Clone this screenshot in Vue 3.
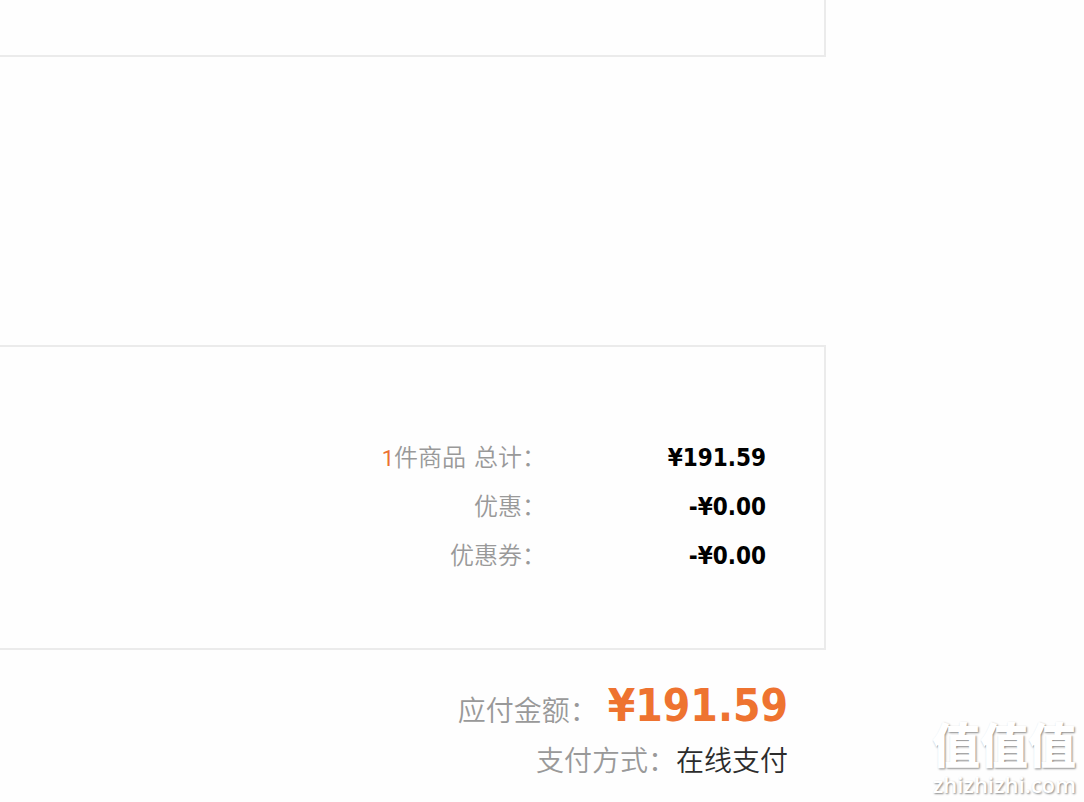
<script setup>
const rows = [
  { count: '1', label: '件商品', extra: '总计：', value: '¥191.59' },
  { label: '优惠：', value: '-¥0.00' },
  { label: '优惠券：', value: '-¥0.00' },
]
</script>

<template>
  <main class="page">
    <section class="panel previous"></section>
    <section class="panel totals">
      <dl>
        <div v-for="row in rows" :key="row.label" class="row">
          <dt>
            <span v-if="row.count" class="count">{{ row.count }}</span>{{ row.label }}<span v-if="row.extra" class="extra">{{ row.extra }}</span>
          </dt>
          <dd>{{ row.value }}</dd>
        </div>
      </dl>
    </section>
    <dl class="payment">
      <div class="due">
        <dt>应付金额：</dt>
        <dd class="amount">¥191.59</dd>
      </div>
      <div class="method">
        <dt>支付方式：</dt>
        <dd>在线支付</dd>
      </div>
    </dl>
    <div class="watermark">
      <span class="brand">值值值</span>
      <span class="domain">zhizhizhi.com</span>
    </div>
  </main>
</template>

<style>
body {
  margin: 0;
  background: #fefefe;
}
</style>

<style scoped>
.page {
  position: relative;
  box-sizing: border-box;
  min-height: 100vh;
  padding-right: 258px;
  overflow: hidden;
  color: #999;
  font-family: "Noto Sans CJK SC", sans-serif;
  font-weight: 350;
}

.panel {
  border: solid #ebebeb;
  border-width: 2px 2px 2px 0;
}

.previous {
  height: 55px;
  border-top: 0;
}

.totals {
  margin-top: 288px;
  padding: 85px 58px 69px 0;
}

dl,
dd {
  margin: 0;
}

.row {
  display: flex;
  justify-content: flex-end;
  align-items: baseline;
  height: 49px;
  font-size: 24px;
  line-height: 48px;
}

.count {
  color: #ec7030;
  font-family: Roboto, sans-serif;
  font-size: 22px;
  font-weight: 400;
}

.extra {
  margin-left: 8px;
}

.row dd {
  width: 220px;
  color: #000;
  font-family: "DejaVu Sans Condensed", "DejaVu Sans", sans-serif;
  font-weight: 700;
  text-align: right;
}

.payment {
  padding: 31px 38px 0 0;
  font-size: 28px;
}

.payment div {
  display: flex;
  justify-content: flex-end;
  align-items: baseline;
  line-height: 50px;
}

.amount {
  margin-left: 10px;
  color: #ee7330;
  font-family: "DejaVu Sans Condensed", "DejaVu Sans", sans-serif;
  font-size: 44px;
  font-weight: 700;
}

.method dd {
  color: #2c2c2c;
}

.watermark {
  position: absolute;
  right: 8px;
  bottom: 6px;
  display: flex;
  flex-direction: column;
  align-items: flex-end;
  color: #fff;
  text-shadow: 1px 1px 2px #888;
}

.brand {
  font-size: 48px;
  font-weight: 900;
  line-height: 60px;
}

.domain {
  font-family: "Open Sans", sans-serif;
  font-size: 22px;
  font-weight: 600;
  line-height: 24px;
}
</style>
